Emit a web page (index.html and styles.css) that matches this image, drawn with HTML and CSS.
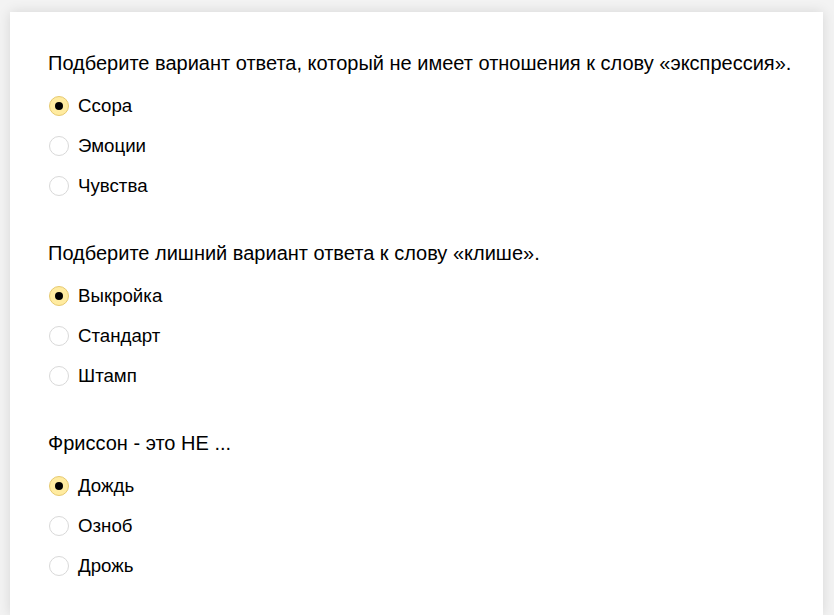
FILE: index.html
```html
<!DOCTYPE html>
<html lang="ru">
<head>
<meta charset="utf-8">
<link rel="stylesheet" href="styles.css">
</head>
<body>
<div class="card">
  <div class="group">
    <div class="question">Подберите вариант ответа, который не имеет отношения к слову «экспрессия».</div>
    <div class="options">
      <div class="option"><span class="radio checked"></span><span class="label">Ссора</span></div>
      <div class="option"><span class="radio"></span><span class="label">Эмоции</span></div>
      <div class="option"><span class="radio"></span><span class="label">Чувства</span></div>
    </div>
  </div>
  <div class="group">
    <div class="question">Подберите лишний вариант ответа к слову «клише».</div>
    <div class="options">
      <div class="option"><span class="radio checked"></span><span class="label">Выкройка</span></div>
      <div class="option"><span class="radio"></span><span class="label">Стандарт</span></div>
      <div class="option"><span class="radio"></span><span class="label">Штамп</span></div>
    </div>
  </div>
  <div class="group">
    <div class="question">Фриссон - это НЕ ...</div>
    <div class="options">
      <div class="option"><span class="radio checked"></span><span class="label">Дождь</span></div>
      <div class="option"><span class="radio"></span><span class="label">Озноб</span></div>
      <div class="option"><span class="radio"></span><span class="label">Дрожь</span></div>
    </div>
  </div>
</div>
</body>
</html>
```
FILE: styles.css
```css
html, body {
  margin: 0;
  padding: 0;
}
body {
  background: #f3f3f3;
  font-family: "Liberation Sans", Arial, sans-serif;
  color: #000;
  padding: 12px 11px 0 10px;
  height: 615px;
  box-sizing: border-box;
  overflow: hidden;
}
.card {
  background: #fff;
  box-shadow: 0 0 12px rgba(0, 0, 0, 0.12);
  padding: 39px 20px 0 38px;
  height: 603px;
  box-sizing: border-box;
  display: flex;
  flex-direction: column;
  gap: 35px;
}
.group {
  display: flex;
  flex-direction: column;
  gap: 11px;
}
.question {
  font-size: 20px;
  line-height: 24px;
}
.options {
  display: flex;
  flex-direction: column;
}
.option {
  height: 40px;
  display: flex;
  align-items: center;
  font-size: 18.7px;
}
.radio {
  width: 20px;
  height: 20px;
  box-sizing: border-box;
  border-radius: 50%;
  border: 1px solid #d9d9d9;
  background: #fff;
  margin-left: 1px;
  margin-right: 9px;
  display: flex;
  align-items: center;
  justify-content: center;
  flex-shrink: 0;
}
.radio.checked {
  background: #ffeba0;
  border-color: #e6c970;
}
.radio.checked::after {
  content: "";
  width: 8px;
  height: 8px;
  border-radius: 50%;
  background: #000;
}
.label {
  line-height: 24px;
}
```
